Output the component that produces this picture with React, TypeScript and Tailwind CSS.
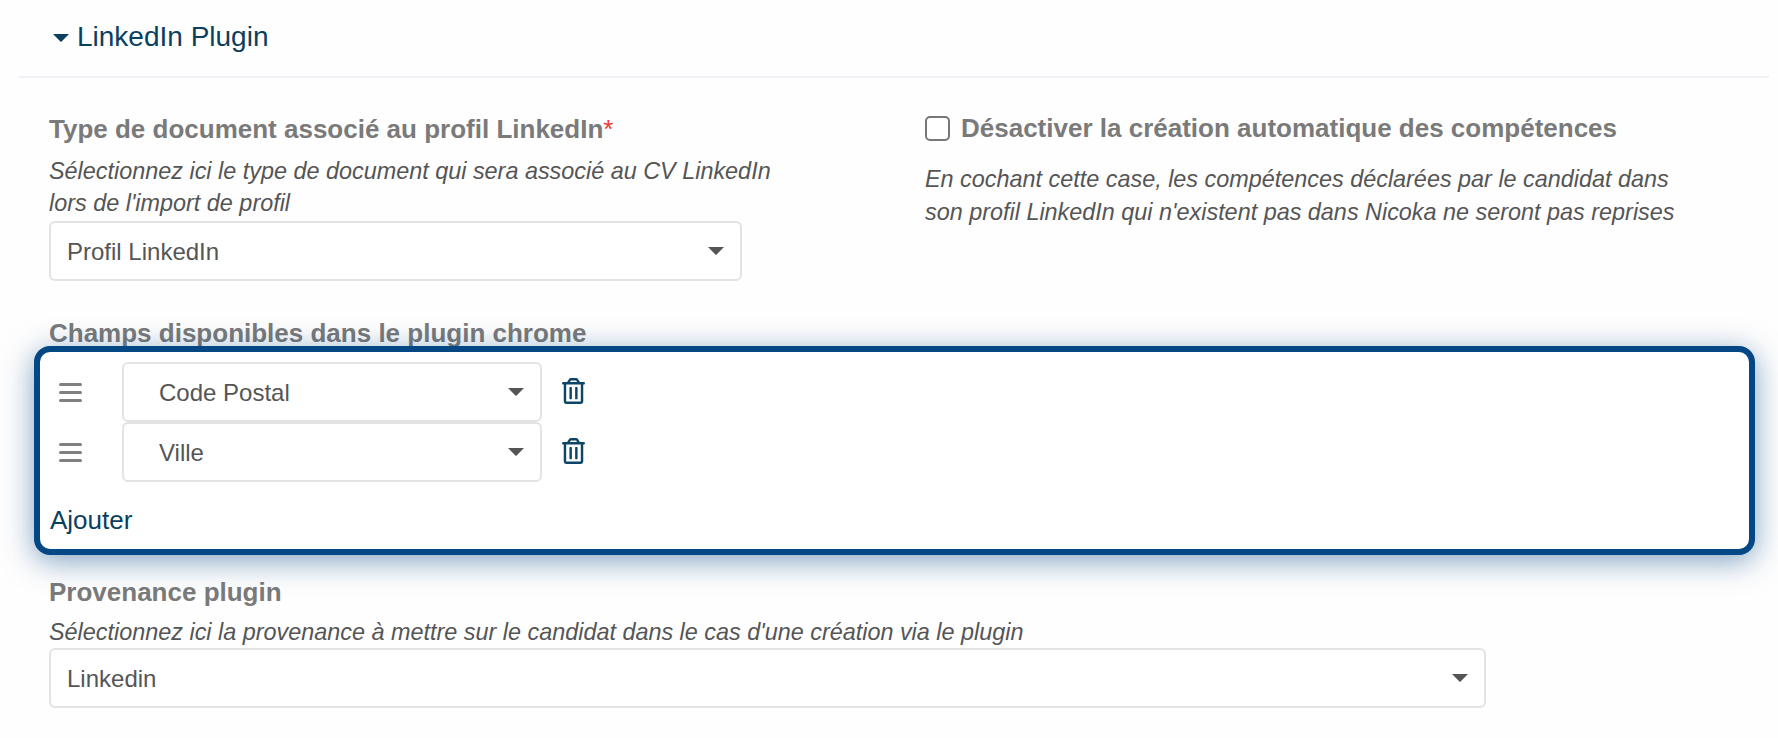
import { FaRegTrashAlt } from "react-icons/fa";

function Caret({ className }: { className: string }) {
  return (
    <svg viewBox="0 0 16 8" className={className} fill="currentColor">
      <path d="M0 0h16L8.6 7.6a.8.8 0 0 1-1.2 0z" />
    </svg>
  );
}

function SelectBox({ value, className }: { value: string; className: string }) {
  return (
    <div
      className={`flex h-[60px] items-center justify-between rounded-[6px] border-2 border-[#e3e3e3] bg-white text-[24px] text-[#555] ${className}`}
    >
      <span className="pt-[2px]">{value}</span>
      <Caret className="h-[8px] w-[16px] text-[#555]" />
    </div>
  );
}

function Handle() {
  return (
    <div className="flex w-[23px] flex-col gap-[5px]">
      <div className="h-[3px] rounded-full bg-[#808080]" />
      <div className="h-[3px] rounded-full bg-[#808080]" />
      <div className="h-[3px] rounded-full bg-[#808080]" />
    </div>
  );
}

function FieldRow({ value }: { value: string }) {
  return (
    <div className="flex items-center">
      <div className="ml-[19px] mr-[40px]">
        <Handle />
      </div>
      <SelectBox value={value} className="w-[420px] pl-[35px] pr-[16px]" />
      <FaRegTrashAlt className="ml-[20px] mb-[3px] h-[26px] w-[23px] text-[#0d4566]" />
    </div>
  );
}

export default function App() {
  return (
    <div className="h-[738px] overflow-hidden bg-[#fefefe] font-['Liberation_Sans',sans-serif]">
      <div className="ml-[19px] mr-[9px] border-b-2 border-[#eef1f5]">
        <div className="flex h-[76px] items-center gap-[8px] pb-[2px] pl-[34px] text-[28px] text-[#0b3f5e]">
          <Caret className="mt-[2px] h-[8px] w-[16px]" />
          <span>LinkedIn Plugin</span>
        </div>
      </div>

      <div className="flex pt-[36px]">
        <div className="w-[925px] pl-[49px]">
          <div className="text-[26px] leading-[30px] font-bold text-[#7a7a7a]">
            Type de document associé au profil LinkedIn
            <span className="font-normal text-[#f03a2e]">*</span>
          </div>
          <div className="mt-[11px] w-[740px] text-[23.4px] leading-[32px] text-[#555] italic">
            Sélectionnez ici le type de document qui sera associé au CV LinkedIn lors de l'import de
            profil
          </div>
          <SelectBox value="Profil LinkedIn" className="mt-[2px] w-[693px] pl-[16px] pr-[16px]" />
        </div>
        <div className="mt-[-1px] flex-1">
          <div className="flex h-[30px] items-center gap-[11px] text-[26px] font-bold text-[#7a7a7a]">
            <div className="h-[25px] w-[25px] rounded-[5px] border-2 border-[#777] bg-white" />
            <span>Désactiver la création automatique des compétences</span>
          </div>
          <div className="mt-[20px] w-[800px] text-[23.4px] leading-[33px] text-[#555] italic">
            En cochant cette case, les compétences déclarées par le candidat dans
            <br />
            son profil LinkedIn qui n'existent pas dans Nicoka ne seront pas reprises
          </div>
        </div>
      </div>

      <div className="mt-[37px] pl-[49px] text-[26px] leading-[30px] font-bold text-[#7a7a7a]">
        Champs disponibles dans le plugin chrome
      </div>

      <div className="relative ml-[34px] mr-[23px] mt-[-2px] h-[209px] rounded-[16px] border-[6px] border-[#034885] bg-white pt-[10px] shadow-[0_6px_30px_rgba(3,72,133,0.5)]">
        <div className="flex flex-col">
          <FieldRow value="Code Postal" />
          <FieldRow value="Ville" />
        </div>
        <div className="mt-[20px] pl-[10px] text-[26px] leading-[36px] text-[#0b3f5e]">Ajouter</div>
      </div>

      <div className="pl-[49px]">
        <div className="mt-[22px] text-[26px] leading-[30px] font-bold text-[#7a7a7a]">
          Provenance plugin
        </div>
        <div className="mt-[9px] text-[23.4px] leading-[33px] text-[#555] italic">
          Sélectionnez ici la provenance à mettre sur le candidat dans le cas d'une création via le
          plugin
        </div>
        <SelectBox value="Linkedin" className="mt-[-1px] w-[1437px] pl-[16px] pr-[16px]" />
      </div>
    </div>
  );
}
